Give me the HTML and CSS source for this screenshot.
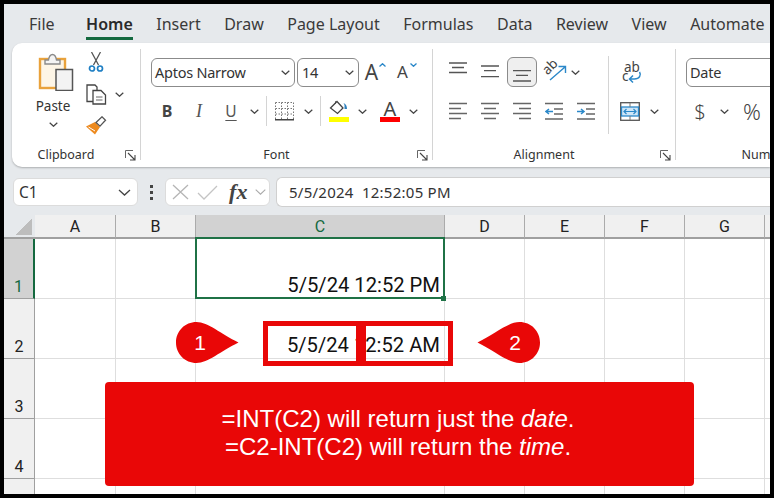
FILE: index.html
```html
<!DOCTYPE html>
<html lang="en">
<head>
<meta charset="utf-8">
<title>Excel INT date and time</title>
<link rel="stylesheet" href="styles.css">
</head>
<body>
<svg class="defs" aria-hidden="true">
  <symbol id="chev" viewBox="0 0 9 5"><path d="M.7.7 4.5 4.3 8.3.7" fill="none" stroke="#444" stroke-width="1.2"/></symbol>
  <symbol id="launch" viewBox="0 0 11 11"><path d="M.5 8V.5H8" fill="none" stroke="#666"/><path d="M3 3l6.5 6.5M10 5v5H5" fill="none" stroke="#444" stroke-width="1.1"/></symbol>
  <symbol id="a-top" viewBox="0 0 18 20"><path d="M0 1h18M3 5.5h12M0 10.5h18" stroke="#555" stroke-width="1.3"/></symbol>
  <symbol id="a-mid" viewBox="0 0 18 20"><path d="M0 4h18M3 8.7h12M0 14.7h18" stroke="#555" stroke-width="1.3"/></symbol>
  <symbol id="a-bot" viewBox="0 0 18 20"><path d="M0 8.7h18M3 13.3h12M0 19h18" stroke="#555" stroke-width="1.3"/></symbol>
  <symbol id="a-left" viewBox="0 0 18 20"><path d="M0 2.5h18M0 7.5h12M0 12.5h18M0 17.5h12" stroke="#666" stroke-width="1.4"/></symbol>
  <symbol id="a-center" viewBox="0 0 18 20"><path d="M0 2.5h18M3 7.5h12M0 12.5h18M3 17.5h12" stroke="#666" stroke-width="1.4"/></symbol>
  <symbol id="a-right" viewBox="0 0 18 20"><path d="M0 2.5h18M6 7.5h12M0 12.5h18M6 17.5h12" stroke="#666" stroke-width="1.4"/></symbol>
</svg>
<div class="frame">
  <nav class="tabs">
    <span class="tab">File</span>
    <span class="tab tab-active">Home</span>
    <span class="tab">Insert</span>
    <span class="tab">Draw</span>
    <span class="tab">Page Layout</span>
    <span class="tab">Formulas</span>
    <span class="tab">Data</span>
    <span class="tab">Review</span>
    <span class="tab">View</span>
    <span class="tab">Automate</span>
  </nav>

  <section class="ribbon">
    <div class="group group-clip">
      <div class="group-body clip-body">
        <div class="paste">
          <svg class="paste-icon" width="36" height="38" viewBox="0 0 36 38">
            <rect x="2" y="6" width="25" height="29" fill="#fdf5e6" stroke="#e9a23b" stroke-width="2.4"/>
            <path d="M7 11V7h3.5C11 4 12.5 1.5 14.5 1.5S18 4 18.5 7H22v4z" fill="#f4f4f4" stroke="#8a8a8a" stroke-width="1.4"/>
            <rect x="18" y="16.5" width="16.5" height="21" fill="#f3f3f3" stroke="#555" stroke-width="1.5"/>
          </svg>
          <span class="paste-label">Paste</span>
          <svg class="chev" width="9" height="5"><use href="#chev"/></svg>
        </div>
        <div class="clip-tools">
          <div class="tool tool-cut">
            <svg width="16" height="20" viewBox="0 0 16 20">
              <path d="M3.5 0 10.5 13M12.5 0 5.5 13" stroke="#555" stroke-width="1.3" fill="none"/>
              <circle cx="4" cy="16.5" r="2.5" fill="none" stroke="#1f7fc4" stroke-width="1.7"/>
              <circle cx="12" cy="16.5" r="2.5" fill="none" stroke="#1f7fc4" stroke-width="1.7"/>
            </svg>
          </div>
          <div class="tool tool-copy">
            <svg width="21" height="21" viewBox="0 0 21 21">
              <path d="M7 17.5H1V1h8l2 2v3" fill="#fff" stroke="#444" stroke-width="1.3"/>
              <path d="M7 6.5h8l4.5 4.5v9H7z" fill="#fff" stroke="#444" stroke-width="1.3"/>
              <path d="M10 13h6.5M10 16h6.5" stroke="#666"/>
            </svg>
            <svg class="chev chev-copy" width="9" height="5"><use href="#chev"/></svg>
          </div>
          <div class="tool tool-brush">
            <svg width="21" height="19" viewBox="0 0 21 19">
              <path d="M0 10.5 9 6l5 5-5 7.5z" fill="#ed8a1f"/>
              <path d="M2.5 11 9 15" stroke="#fff"/>
              <path d="M10 6.5 16 .8l3.5 3.4-5.500 6z" fill="#fff" stroke="#555" stroke-width="1.3"/>
            </svg>
          </div>
        </div>
      </div>
      <div class="group-foot">
        <span class="group-label">Clipboard</span>
        <svg class="launcher" width="11" height="11"><use href="#launch"/></svg>
      </div>
    </div>

    <div class="group group-font">
      <div class="group-body rows">
        <div class="row">
          <div class="select select-font"><span>Aptos Narrow</span><svg width="9" height="5"><use href="#chev"/></svg></div>
          <div class="select select-size"><span>14</span><svg width="9" height="5"><use href="#chev"/></svg></div>
          <div class="slot w32 size-a"><span class="a-big">A</span><svg class="caret" width="7" height="4" viewBox="0 0 7 4"><path d="M.5 3.5 3.5.7 6.5 3.5" fill="none" stroke="#2b88c9" stroke-width="1.3"/></svg></div>
          <div class="slot w32 size-a"><span class="a-small">A</span><svg class="caret" width="7" height="4" viewBox="0 0 7 4"><path d="M.5.5 3.5 3.3 6.5.5" fill="none" stroke="#2b88c9" stroke-width="1.3"/></svg></div>
        </div>
        <div class="row">
          <div class="slot w32 b-btn">B</div>
          <div class="slot w32 i-btn">I</div>
          <div class="slot w32 u-btn">U</div>
          <div class="slot w14"><svg width="9" height="5"><use href="#chev"/></svg></div>
          <div class="sep-sm"></div>
          <div class="slot w24">
            <svg width="19" height="19" viewBox="0 0 19 19">
              <path d="M.5.5h18M.5 6.5h18M.5 12h18M.5.5v18M6.5.5v18M12.5.5v18M18.5.5v18" stroke="#777" stroke-dasharray="1.5 1.5" fill="none"/>
              <path d="M0 17.8h19" stroke="#444" stroke-width="1.6"/>
            </svg>
          </div>
          <div class="slot w24"><svg width="9" height="5"><use href="#chev"/></svg></div>
          <div class="sep-sm sep-tight"></div>
          <div class="slot w26 stack">
            <svg width="20" height="15" viewBox="0 0 20 15">
              <path d="M1.5 8 8 1.5 14 8l-5.5 5.5z" fill="#fff" stroke="#444" stroke-width="1.3"/>
              <path d="M7 1 6 4" stroke="#444"/>
              <path d="M14.5 3c2.5 1 3.5 3 3.5 6h-2.5V5z" fill="#2b7fbd"/>
            </svg>
            <i class="bar bar-yellow"></i>
          </div>
          <div class="slot w20"><svg width="9" height="5"><use href="#chev"/></svg></div>
          <div class="slot w36 stack"><span class="a-color">A</span><i class="bar bar-red"></i></div>
          <div class="slot w10"><svg width="9" height="5"><use href="#chev"/></svg></div>
        </div>
      </div>
      <div class="group-foot">
        <span class="group-label">Font</span>
        <svg class="launcher" width="11" height="11"><use href="#launch"/></svg>
      </div>
    </div>

    <div class="group group-align">
      <div class="group-body align-body">
        <div class="rows align-left">
          <div class="row">
            <div class="slot w32"><svg width="18" height="20"><use href="#a-top"/></svg></div>
            <div class="slot w32"><svg width="18" height="20"><use href="#a-mid"/></svg></div>
            <div class="slot w32"><div class="pressed"><svg width="18" height="20"><use href="#a-bot"/></svg></div></div>
            <div class="slot w32">
              <svg class="icon-open" width="24" height="24" viewBox="0 0 24 24">
                <text x="11" y="10" text-anchor="middle" transform="rotate(-45 11 10)" class="svg-text">ab</text>
                <path d="M8 20 23 7M16.5 6.5H23.5V13" fill="none" stroke="#2b88c9" stroke-width="1.4"/>
              </svg>
            </div>
            <div class="slot w10"><svg width="9" height="5"><use href="#chev"/></svg></div>
          </div>
          <div class="row">
            <div class="slot w32"><svg width="18" height="20"><use href="#a-left"/></svg></div>
            <div class="slot w32"><svg width="18" height="20"><use href="#a-center"/></svg></div>
            <div class="slot w32"><svg width="18" height="20"><use href="#a-right"/></svg></div>
            <div class="slot w32">
              <svg width="18" height="20" viewBox="0 0 18 20">
                <path d="M0 2.5h18M9 8h9M9 13h9M0 18h18" stroke="#666" stroke-width="1.4"/>
                <path d="M8 10.5H1M4 8 1 10.5 4 13" fill="none" stroke="#2b88c9" stroke-width="1.5"/>
              </svg>
            </div>
            <div class="slot w32">
              <svg width="18" height="20" viewBox="0 0 18 20">
                <path d="M0 2.5h18M9 8h9M9 13h9M0 18h18" stroke="#666" stroke-width="1.4"/>
                <path d="M0 10.5h7M4 8 7 10.5 4 13" fill="none" stroke="#2b88c9" stroke-width="1.5"/>
              </svg>
            </div>
          </div>
        </div>
        <div class="sep-lg"></div>
        <div class="rows">
          <div class="row">
            <div class="slot w46">
              <svg class="icon-open" width="20" height="23" viewBox="0 0 20 23">
                <text class="svg-text"><tspan x="2" y="10.5">ab</tspan><tspan x="0" y="20">c</tspan></text>
                <path d="M17.5 11c2 3 0 7-5 7H8M11 14.5 7.5 18 11 21.5" fill="none" stroke="#2b88c9" stroke-width="1.5"/>
              </svg>
            </div>
          </div>
          <div class="row">
            <div class="slot w42">
              <svg width="20" height="19" viewBox="0 0 20 19">
                <rect x=".7" y=".7" width="18.6" height="17.6" fill="#fff" stroke="#555" stroke-width="1.3"/>
                <rect x="1.5" y="5" width="17" height="9" fill="#cfe6f7" stroke="#2b88c9" stroke-width="1.3"/>
                <path d="M4 9.5h12M6.5 7 4 9.5 6.5 12M13.5 7 16 9.5 13.5 12" fill="none" stroke="#2b88c9" stroke-width="1.2"/>
                <path d="M10 1v4M10 14v4" stroke="#777"/>
              </svg>
            </div>
            <div class="slot w6"><svg class="wide" width="9" height="5"><use href="#chev"/></svg></div>
          </div>
        </div>
      </div>
      <div class="group-foot">
        <span class="group-label">Alignment</span>
        <svg class="launcher" width="11" height="11"><use href="#launch"/></svg>
      </div>
    </div>

    <div class="group group-number">
      <div class="group-body rows">
        <div class="row"><div class="select select-date"><span>Date</span></div></div>
        <div class="row">
          <div class="slot w28 num-sym">$</div>
          <div class="slot w20"><svg width="9" height="5"><use href="#chev"/></svg></div>
          <div class="slot w36 num-sym pct">%</div>
        </div>
      </div>
      <div class="group-foot">
        <span class="group-label">Number</span>
      </div>
    </div>
  </section>

  <section class="formula-row">
    <div class="name-box"><span>C1</span><svg width="13" height="7" viewBox="0 0 13 7"><path d="M1 1l5.5 5L12 1" fill="none" stroke="#444" stroke-width="1.3"/></svg></div>
    <div class="dots"><i></i><i></i><i></i></div>
    <div class="fx-box">
      <svg width="17" height="16" viewBox="0 0 17 16"><path d="M1 1l15 14M16 1 1 15" stroke="#b5b5b5" stroke-width="1.3"/></svg>
      <svg width="21" height="15" viewBox="0 0 21 15"><path d="M1 8l6 6L20 1" fill="none" stroke="#c4c4c4" stroke-width="1.3"/></svg>
      <span class="fx">fx</span>
      <svg width="11" height="6" viewBox="0 0 11 6"><path d="M.7.7 5.5 5.2 10.3.7" fill="none" stroke="#aaa" stroke-width="1.1"/></svg>
    </div>
    <div class="formula-box">5/5/2024&nbsp; 12:52:05 PM</div>
  </section>

  <section class="sheet">
    <div class="corner"><i class="corner-tri"></i></div>
    <div class="col-head">A</div>
    <div class="col-head">B</div>
    <div class="col-head col-sel">C</div>
    <div class="col-head">D</div>
    <div class="col-head">E</div>
    <div class="col-head">F</div>
    <div class="col-head">G</div>
    <div class="col-head"></div>

    <div class="row-head row-sel">1</div>
    <div class="cell"></div><div class="cell"></div>
    <div class="cell cell-value">5/5/24 12:52 PM</div>
    <div class="cell"></div><div class="cell"></div><div class="cell"></div><div class="cell"></div><div class="cell"></div>

    <div class="row-head">2</div>
    <div class="cell"></div><div class="cell"></div>
    <div class="cell cell-value">5/5/24 12:52 AM</div>
    <div class="cell"></div><div class="cell"></div><div class="cell"></div><div class="cell"></div><div class="cell"></div>

    <div class="row-head">3</div>
    <div class="cell"></div><div class="cell"></div><div class="cell"></div><div class="cell"></div><div class="cell"></div><div class="cell"></div><div class="cell"></div><div class="cell"></div>

    <div class="row-head">4</div>
    <div class="cell"></div><div class="cell"></div><div class="cell"></div><div class="cell"></div><div class="cell"></div><div class="cell"></div><div class="cell"></div><div class="cell"></div>

    <div class="row-head"></div>
    <div class="cell"></div><div class="cell"></div><div class="cell"></div><div class="cell"></div><div class="cell"></div><div class="cell"></div><div class="cell"></div><div class="cell"></div>

    <div class="selection"><i class="handle"></i></div>
    <div class="mark mark-date"></div>
    <div class="mark mark-time"></div>
    <div class="callout callout-1">
      <svg width="63" height="41" viewBox="0 0 63 41"><path d="M20.5 0C32 0 45 12 62.5 20.5 45 29 32 41 20.5 41 9 41 0 32 0 20.5S9 0 20.5 0z" fill="#e90707"/></svg>
      <span>1</span>
    </div>
    <div class="callout callout-2">
      <svg width="63" height="41" viewBox="0 0 63 41"><path d="M42.5 0C31 0 18 12 .5 20.5 18 29 31 41 42.5 41 54 41 63 32 63 20.5S54 0 42.5 0z" fill="#e90707"/></svg>
      <span>2</span>
    </div>
    <div class="banner">
      <p>=INT(C2) will return just the <em>date</em>.</p>
      <p>=C2-INT(C2) will return the <em>time</em>.</p>
    </div>
  </section>
</div>
</body>
</html>
```
FILE: styles.css
```css
* { box-sizing: border-box; }
html, body { margin: 0; padding: 0; background: #000; }
.defs { position: absolute; width: 0; height: 0; }
.frame {
  width: 774px; height: 498px; border: 4px solid #000;
  background: #e6e9ec; overflow: hidden;
  font-family: "Noto Sans", sans-serif; color: #333;
}
.tabs { height: 39px; display: flex; gap: 23.5px; padding: 0 0 0 25px; white-space: nowrap; }
.tab { font-size: 16px; line-height: 40px; height: 36px; color: #3a3a3a; }
.tab-active { font-weight: 600; margin-left: 8px; border-bottom: 3px solid #14693f; color: #2a2a2a; }

.ribbon {
  margin-left: 8px; height: 124px; display: flex; padding-top: 6px;
  background: #fff; border-radius: 10px 0 0 10px; overflow: hidden;
  box-shadow: 0 1px 2px rgba(0,0,0,.25);
}
.group { height: 111px; display: flex; flex-direction: column; flex: none; border-right: 1px solid #d4d4d4; }
.group-clip { width: 129px; }
.group-font { width: 292px; padding-left: 10px; }
.group-align { width: 243px; padding-left: 9px; }
.group-number { width: 200px; padding-left: 10px; border-right: 0; }
.group-body { flex: 1; min-height: 0; display: flex; }
.group-foot { height: 12px; display: grid; grid-template-columns: 1fr 11px; column-gap: 5px; padding: 1px 4px 0 0; align-items: center; }
.group-font .group-foot { margin-left: -10px; }
.group-align .group-foot { margin-left: -9px; }
.group-number .group-foot { margin-left: -10px; }
.group-label { font-size: 12.5px; line-height: 12px; text-align: center; color: #333; white-space: nowrap; }

.rows { flex-direction: column; gap: 9px; padding-top: 8px; display: flex; }
.row { height: 30px; display: flex; align-items: center; flex: none; }
.slot { height: 30px; flex: none; display: flex; align-items: center; justify-content: center; }
.w6 { width: 6px; } .w10 { width: 10px; } .w14 { width: 14px; } .w20 { width: 20px; }
.w24 { width: 24px; } .w26 { width: 26px; } .w28 { width: 28px; } .w32 { width: 32px; }
.w36 { width: 36px; } .w42 { width: 42px; } .w46 { width: 46px; }
.wide, .icon-open { flex: none; overflow: visible; }

.clip-body { padding: 0 0 0 18px; }
.paste { width: 46px; padding-top: 4px; display: flex; flex-direction: column; align-items: center; }
.paste-icon { margin-left: 5px; flex: none; }
.paste-label { font-size: 13.5px; line-height: 20px; margin-top: 5px; color: #333; }
.paste .chev { margin-top: 6px; }
.clip-tools { display: flex; flex-direction: column; padding-left: 7px; }
.tool { width: 26px; display: flex; align-items: center; justify-content: center; position: relative; flex: none; }
.tool-cut { height: 26px; }
.tool-copy { height: 38px; justify-content: flex-start; padding-left: 3px; }
.tool-brush { height: 24px; }
.chev-copy { position: absolute; left: 32px; top: 17px; }

.select { height: 29px; border: 1px solid #8b8b8b; border-radius: 6px; display: flex; align-items: center; justify-content: space-between; background: #fff; font-size: 14.5px; letter-spacing: -.25px; color: #333; flex: none; padding: 0 4px 0 3px; }
.select-font { width: 144px; }
.select-size { width: 62px; margin-left: 2px; padding-left: 4px; }
.select-date { width: 200px; }
.size-a { position: relative; align-items: center; }
.a-big { font-size: 21px; line-height: 30px; color: #444; margin: 0 4px 0 1px; }
.a-small { font-size: 17px; line-height: 30px; color: #444; margin-right: 5px; }
.caret { margin: -14px 0 0 -3px; }
.b-btn { font-weight: 700; font-size: 16px; color: #444; }
.i-btn { font-style: italic; font-size: 18px; color: #555; font-family: "Liberation Serif", serif; }
.u-btn { text-decoration: underline; font-size: 15.5px; color: #555; text-underline-offset: 3px; }
.sep-sm { width: 1px; height: 30px; background: #d4d4d4; margin: 0 5px; flex: none; }
.sep-tight { margin-left: 0; }
.stack { flex-direction: column; justify-content: flex-start; padding-top: 4px; }
.bar { display: block; width: 20px; height: 5px; flex: none; }
.bar-yellow { background: #ff0; margin-top: 2px; }
.bar-red { background: #f00; }
.a-color { font-size: 20px; line-height: 17px; color: #444; }

.align-left { width: 166px; flex: none; }
.sep-lg { width: 1px; height: 78px; margin-top: 7px; background: #d4d4d4; flex: none; }
.pressed { width: 30px; height: 30px; border: 1px solid #8b8b8b; border-radius: 6px; background: #efefef; display: flex; align-items: center; justify-content: center; }
.svg-text { font-family: "Noto Sans", sans-serif; font-size: 13.5px; fill: #444; }
.num-sym { font-size: 20px; color: #444; font-weight: 300; }
.pct { font-size: 22px; }

.formula-row { height: 48px; display: flex; align-items: flex-start; padding: 11px 0 0 9px; }
.name-box { width: 125px; height: 28px; background: #fff; border: 1px solid #dcdcdc; border-radius: 6px; display: flex; align-items: center; justify-content: space-between; padding: 0 6px 0 5px; font-size: 15.5px; color: #333; }
.dots { width: 27px; height: 28px; display: flex; flex-direction: column; align-items: center; justify-content: center; gap: 3px; }
.dots i { width: 3px; height: 3px; background: #444; display: block; }
.fx-box { width: 105px; height: 28px; background: #fff; border: 1px solid #dcdcdc; border-radius: 6px; display: flex; align-items: center; padding: 0 3px 0 6px; justify-content: space-between; }
.fx { font-family: "Liberation Serif", serif; font-style: italic; font-weight: 700; font-size: 22px; color: #444; line-height: 20px; margin-left: 4px; }
.formula-box { flex: 1; height: 30px; margin: -1px 0 0 6px; background: #fff; border: 1px solid #d0d0d0; border-right: 0; border-radius: 6px 0 0 6px; padding-left: 12px; font-size: 15px; letter-spacing: .25px; line-height: 28px; color: #333; white-space: nowrap; }

.sheet { position: relative; display: grid; grid-template-columns: 31px 81px 80px 249px 80px 80px 80px 80px 80px; grid-template-rows: 24px 60px 60px 60px 60px 60px; background: #fff; font-family: Roboto, sans-serif; }
.corner { background: #e6e9ec; display: flex; padding: 4px 3px 3px 12px; border-bottom: 2px solid #a0a0a0; }
.corner-tri { width: 16px; height: 16px; background: linear-gradient(135deg, transparent 50%, #bdbdbd 50%); display: block; }
.col-head { background: #f0f0f0; border-right: 1px solid #ababab; border-bottom: 2px solid #a0a0a0; text-align: center; font-size: 16px; line-height: 23px; color: #222; }
.col-sel { background: #d2d2d2; color: #14693f; border-bottom-color: #14693f; }
.row-head { background: #f0f0f0; border-right: 1px solid #a0a0a0; border-bottom: 1px solid #a0a0a0; font-size: 16px; display: flex; align-items: flex-end; justify-content: center; color: #222; line-height: 23px; }
.row-sel { background: #d2d2d2; color: #14693f; border-right: 2px solid #14693f; }
.cell { border-right: 1px solid #dedede; border-bottom: 1px solid #dedede; }
.cell-value { font-size: 20.2px; line-height: 26px; color: #111; display: flex; align-items: flex-end; justify-content: flex-end; padding-right: 4px; white-space: nowrap; overflow: hidden; }

.selection { position: absolute; left: 191px; top: 22px; width: 250px; height: 62px; border: 2px solid #1f7246; }
.handle { position: absolute; right: -3px; bottom: -4px; width: 5px; height: 5px; background: #1f7246; display: block; }
.mark { position: absolute; top: 106px; height: 45px; border: 5px solid #e90707; }
.mark-date { left: 259px; width: 98px; }
.mark-time { left: 357px; width: 92px; }
.callout { position: absolute; top: 107px; width: 63px; height: 41px; }
.callout svg { display: block; }
.callout span { position: absolute; top: 0; line-height: 41px; color: #fff; font-family: "Liberation Sans", sans-serif; font-size: 21px; text-align: center; }
.callout-1 { left: 172px; }
.callout-1 span { left: 0; width: 48px; }
.callout-2 { left: 473px; }
.callout-2 span { right: 0; width: 50px; }
.banner { position: absolute; left: 101px; top: 167px; width: 589px; height: 104px; padding: 0 3px 2px 0; background: #e90707; border-radius: 4px; display: flex; flex-direction: column; justify-content: center; align-items: center; color: #fff; font-family: "Liberation Sans", sans-serif; font-size: 24px; line-height: 28px; text-align: center; }
.banner p { margin: 0; }
```
